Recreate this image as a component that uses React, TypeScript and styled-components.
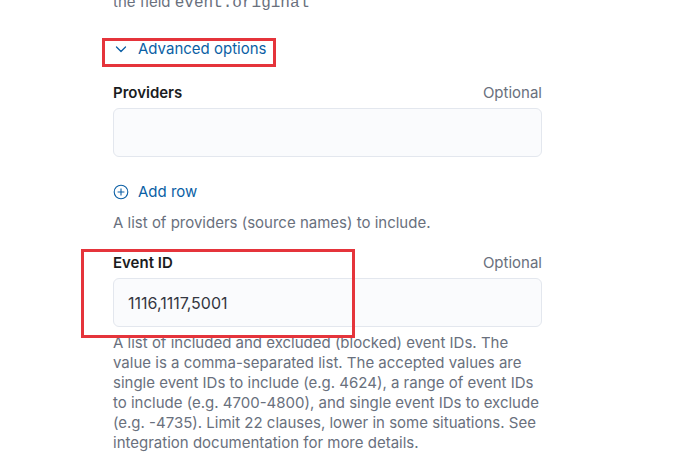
import React from "react";
import styled, { createGlobalStyle } from "styled-components";

const Global = createGlobalStyle`
  html, body { margin: 0; padding: 0; background: #ffffff; }
  body { font-family: Inter, "Noto Sans", sans-serif; overflow: hidden; }
`;

const Page = styled.div`
  width: 429px;
  padding-left: 113px;
  display: flex;
  flex-direction: column;
  color: #343741;
`;

const HelpText = styled.div<{ $mt?: number }>`
  font-size: 15px;
  line-height: 20px;
  color: #69707d;
  margin-top: ${(p) => p.$mt ?? 0}px;
`;

const Mono = styled.code`
  font-family: "Liberation Mono", "DejaVu Sans Mono", monospace;
  font-size: 16px;
  color: #69707d;
`;

const Annotated = styled.div<{ $mt: number }>`
  position: relative;
  margin-top: ${(p) => p.$mt}px;
`;

const RedBox = styled.div<{ $l: number; $t: number; $w: number; $h: number }>`
  position: absolute;
  left: ${(p) => p.$l}px;
  top: ${(p) => p.$t}px;
  width: ${(p) => p.$w}px;
  height: ${(p) => p.$h}px;
  border: 3px solid #e5343b;
  box-sizing: border-box;
  pointer-events: none;
`;

const LinkButton = styled.button<{ $mt?: number }>`
  display: flex;
  align-items: center;
  gap: 9px;
  margin-top: ${(p) => p.$mt ?? 0}px;
  padding: 0;
  border: 0;
  background: none;
  font-family: Inter, "Noto Sans", sans-serif;
  font-size: 15px;
  line-height: 20px;
  color: #0b5fa5;
  cursor: pointer;
`;

const FieldHead = styled.div<{ $mt: number }>`
  display: flex;
  justify-content: space-between;
  align-items: baseline;
  margin-top: ${(p) => p.$mt}px;
  line-height: 20px;
`;

const Label = styled.label`
  font-size: 15px;
  font-weight: 600;
  color: #1a1c21;
`;

const Optional = styled.span`
  font-size: 15px;
  color: #69707d;
`;

const Input = styled.div<{ $mt: number }>`
  box-sizing: border-box;
  height: 49px;
  margin-top: ${(p) => p.$mt}px;
  border: 1px solid #e3e7ee;
  border-radius: 6px;
  background: #fafbfd;
  display: flex;
  align-items: center;
  padding-left: 14px;
  font-size: 16px;
  color: #343741;
`;

const Arrow = () => (
  <svg width="16" height="16" viewBox="0 0 16 16" fill="none">
    <path d="M3.5 6 L8 10.5 L12.5 6" stroke="#0b5fa5" strokeWidth="1.3" strokeLinecap="round" strokeLinejoin="round" />
  </svg>
);

const PlusCircle = () => (
  <svg width="16" height="16" viewBox="0 0 16 16" fill="none">
    <circle cx="8" cy="8" r="6.8" stroke="#0b5fa5" strokeWidth="1.1" />
    <path d="M8 4.6 V11.4 M4.6 8 H11.4" stroke="#0b5fa5" strokeWidth="1.1" />
  </svg>
);

export default function App() {
  return (
    <>
      <Global />
      <Page>
        <HelpText $mt={-8}>
          the field <Mono>event.original</Mono>
        </HelpText>

        <Annotated $mt={26}>
          <LinkButton>
            <Arrow />
            Advanced options
          </LinkButton>
          <RedBox $l={-11} $t={-1} $w={174} $h={29} />
        </Annotated>

        <FieldHead $mt={24}>
          <Label>Providers</Label>
          <Optional>Optional</Optional>
        </FieldHead>
        <Input $mt={5} />

        <LinkButton $mt={25}>
          <PlusCircle />
          Add row
        </LinkButton>
        <HelpText $mt={11}>A list of providers (source names) to include.</HelpText>

        <Annotated $mt={20}>
          <FieldHead $mt={0}>
            <Label>Event ID</Label>
            <Optional>Optional</Optional>
          </FieldHead>
          <Input $mt={5}>1116,1117,5001</Input>
          <RedBox $l={-32} $t={-4} $w={274} $h={89} />
        </Annotated>

        <HelpText $mt={6}>
          A list of included and excluded (blocked) event IDs. The value is a comma-separated list. The accepted
          values are single event IDs to include (e.g. 4624), a range of event IDs to include (e.g. 4700-4800), and
          single event IDs to exclude (e.g. -4735). Limit 22 clauses, lower in some situations. See integration
          documentation for more details.
        </HelpText>
      </Page>
    </>
  );
}
